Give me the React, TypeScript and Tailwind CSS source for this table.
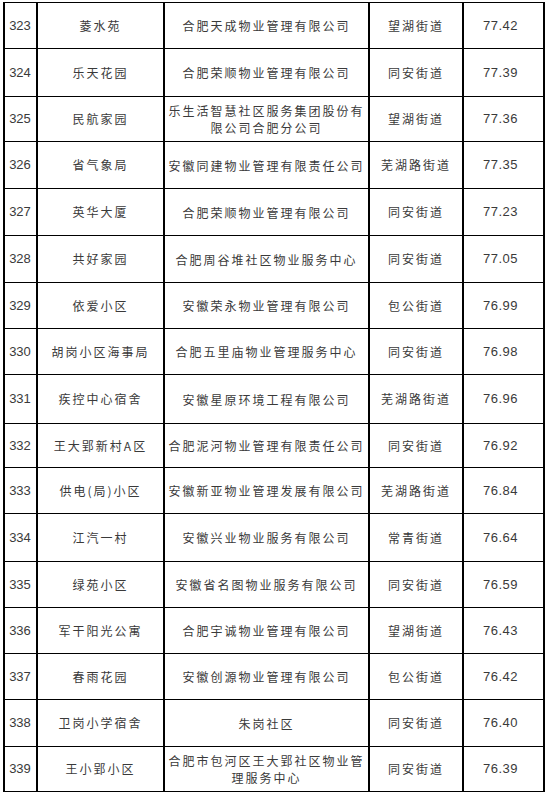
type Row = {
  no: number
  name: string
  company: string[]
  street: string
  score: string
  h: number
}

const rows: Row[] = [
  { no: 323, name: "菱水苑", company: ["合肥天成物业管理有限公司"], street: "望湖街道", score: "77.42", h: 46 },
  { no: 324, name: "乐天花园", company: ["合肥荣顺物业管理有限公司"], street: "同安街道", score: "77.39", h: 48 },
  { no: 325, name: "民航家园", company: ["乐生活智慧社区服务集团股份有", "限公司合肥分公司"], street: "望湖街道", score: "77.36", h: 45 },
  { no: 326, name: "省气象局", company: ["安徽同建物业管理有限责任公司"], street: "芜湖路街道", score: "77.35", h: 47 },
  { no: 327, name: "英华大厦", company: ["合肥荣顺物业管理有限公司"], street: "同安街道", score: "77.23", h: 47 },
  { no: 328, name: "共好家园", company: ["合肥周谷堆社区物业服务中心"], street: "同安街道", score: "77.05", h: 47 },
  { no: 329, name: "依爱小区", company: ["安徽荣永物业管理有限公司"], street: "包公街道", score: "76.99", h: 46 },
  { no: 330, name: "胡岗小区海事局", company: ["合肥五里庙物业管理服务中心"], street: "同安街道", score: "76.98", h: 46 },
  { no: 331, name: "疾控中心宿舍", company: ["安徽星原环境工程有限公司"], street: "芜湖路街道", score: "76.96", h: 49 },
  { no: 332, name: "王大郢新村A区", company: ["合肥泥河物业管理有限责任公司"], street: "同安街道", score: "76.92", h: 44 },
  { no: 333, name: "供电(局)小区", company: ["安徽新亚物业管理发展有限公司"], street: "芜湖路街道", score: "76.84", h: 46 },
  { no: 334, name: "江汽一村", company: ["安徽兴业物业服务有限公司"], street: "常青街道", score: "76.64", h: 48 },
  { no: 335, name: "绿苑小区", company: ["安徽省名图物业服务有限公司"], street: "同安街道", score: "76.59", h: 46 },
  { no: 336, name: "军干阳光公寓", company: ["合肥宇诚物业管理有限公司"], street: "望湖街道", score: "76.43", h: 46 },
  { no: 337, name: "春雨花园", company: ["安徽创源物业管理有限公司"], street: "包公街道", score: "76.42", h: 46 },
  { no: 338, name: "卫岗小学宿舍", company: ["朱岗社区"], street: "同安街道", score: "76.40", h: 47 },
  { no: 339, name: "王小郢小区", company: ["合肥市包河区王大郢社区物业管", "理服务中心"], street: "同安街道", score: "76.39", h: 45 },
]

const cjk = "font-['Noto_Sans_CJK_SC',sans-serif] text-[12px] tracking-[2px]"
const num = "font-['Liberation_Sans',Arial,sans-serif] text-[13px]"

export default function App() {
  return (
    <div className="min-h-[796px] w-[546px] bg-white pl-[3px] pt-[2px] text-[#3a3a3a]">
      <div className="w-[542px] border-l-2 border-t border-black">
        {rows.map((r) => (
          <div key={r.no} className="flex border-b border-black" style={{ height: r.h }}>
            <div className={`flex w-[33px] shrink-0 items-center justify-center border-r-2 border-black pr-[1px] ${num}`}>
              {r.no}
            </div>
            <div className={`flex w-[127px] shrink-0 items-center justify-center border-r-2 border-black ${cjk}`}>
              {r.name}
            </div>
            <div className={`flex w-[205px] shrink-0 flex-col items-center justify-center border-r-2 border-black leading-[17px] ${cjk}`}>
              {r.company.map((line) => (
                <span key={line} className="whitespace-nowrap">{line}</span>
              ))}
            </div>
            <div className={`flex w-[94px] shrink-0 items-center justify-center border-r-2 border-black ${cjk}`}>
              {r.street}
            </div>
            <div className={`flex w-[81px] shrink-0 items-center justify-center border-r-2 border-black pr-[6px] tracking-[0.5px] ${num}`}>
              {r.score}
            </div>
          </div>
        ))}
      </div>
    </div>
  )
}
